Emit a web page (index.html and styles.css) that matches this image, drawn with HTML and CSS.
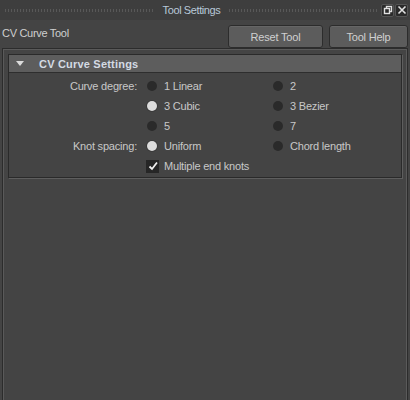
FILE: index.html
```html
<!DOCTYPE html>
<html>
<head>
<meta charset="utf-8">
<link rel="stylesheet" href="styles.css">
</head>
<body>
<div class="titlebar">
  <div class="grip"></div>
  <div class="title">Tool Settings</div>
  <div class="grip"></div>
  <div class="winbtns">
    <span class="wbtn"><svg width="10" height="10" viewBox="0 0 10 10"><rect x="3.5" y="1.5" width="5" height="5" fill="none" stroke="#e0e0e0" stroke-width="1.4"/><rect x="1.5" y="3.5" width="5" height="5" fill="#2a2a2a" stroke="#e0e0e0" stroke-width="1.4"/></svg></span>
    <span class="wbtn"><svg width="10" height="10" viewBox="0 0 10 10"><path d="M1.5 1.5 L8.5 8.5 M8.5 1.5 L1.5 8.5" stroke="#e0e0e0" stroke-width="1.6"/></svg></span>
  </div>
</div>
<div class="toprow">
  <div class="toolname">CV Curve Tool</div>
  <button class="btn reset">Reset Tool</button>
  <button class="btn help">Tool Help</button>
</div>
<div class="frame">
  <div class="section">
    <div class="sechead"><span class="tri"></span><span class="sectitle">CV Curve Settings</span></div>
    <div class="secbody">
      <div class="lbl">Curve degree:</div>
      <div class="opt"><span class="radio"></span>1 Linear</div>
      <div class="opt"><span class="radio"></span>2</div>
      <div class="lbl"></div>
      <div class="opt"><span class="radio on"></span>3 Cubic</div>
      <div class="opt"><span class="radio"></span>3 Bezier</div>
      <div class="lbl"></div>
      <div class="opt"><span class="radio"></span>5</div>
      <div class="opt"><span class="radio"></span>7</div>
      <div class="lbl">Knot spacing:</div>
      <div class="opt"><span class="radio on"></span>Uniform</div>
      <div class="opt"><span class="radio"></span>Chord length</div>
      <div class="lbl"></div>
      <div class="opt wide"><span class="check"><svg width="12" height="12" viewBox="0 0 12 12"><path d="M2.5 6.5 L5 9 L10 2.5" fill="none" stroke="#f0f0f0" stroke-width="1.8"/></svg></span>Multiple end knots</div>
    </div>
  </div>
</div>
</body>
</html>
```
FILE: styles.css
```css
html, body {
  margin: 0;
  padding: 0;
  background: #444444;
  width: 410px;
  height: 400px;
  overflow: hidden;
  font-family: "Liberation Sans", Arial, sans-serif;
  font-size: 11px;
  color: #c8c8c8;
}
.titlebar {
  height: 20px;
  background: #3e3e3e;
  display: flex;
  align-items: center;
  padding-left: 5px;
  box-sizing: border-box;
}
.grip {
  flex: 1;
  height: 3px;
  background: repeating-linear-gradient(90deg, #585858 0 1px, transparent 1px 3px);
}
.title {
  padding: 0 9px;
  color: #b8c8d8;
  font-size: 11px;
  letter-spacing: -0.4px;
}
.winbtns {
  display: flex;
  gap: 1px;
  margin-left: 3px;
  margin-right: 2px;
}
.wbtn {
  width: 13px;
  height: 13px;
  background: #2a2a2a;
  border: 1px solid #555;
  border-radius: 2px;
  box-sizing: border-box;
  display: flex;
  align-items: center;
  justify-content: center;
}
.toprow {
  height: 28px;
  display: flex;
  align-items: center;
  padding-left: 2px;
  box-sizing: border-box;
}
.toolname {
  flex: 1;
  margin-top: -3px;
  letter-spacing: -0.3px;
  color: #cfcfcf;
}
.btn {
  height: 23px;
  background: #5c5c5c;
  border: 1px solid #2c2c2c;
  border-radius: 3px;
  color: #d0d0d0;
  font-family: "Liberation Sans", Arial, sans-serif;
  font-size: 11px;
  letter-spacing: -0.2px;
  padding: 0;
  margin-top: 5px;
  box-shadow: inset 0 1px 0 #666;
}
.reset {
  width: 95px;
  margin-right: 6px;
}
.help {
  width: 79px;
  margin-right: 2px;
}
.frame {
  margin: 0 2px 0 2px;
  height: 352px;
  border: 1px solid #2c2c2c;
  border-bottom: none;
  box-shadow: inset 1px 1px 0 #5a5a5a, inset -1px 0 0 #5a5a5a;
  padding: 5px 5px 0 5px;
  box-sizing: border-box;
}
.section {
  border: 1px solid #2a2a2a;
  box-shadow: 1px 1px 0 #5e5e5e;
}
.sechead {
  height: 17px;
  background: #5d5d5d;
  border-bottom: 1px solid #2e2e2e;
  display: flex;
  align-items: center;
}
.tri {
  width: 0;
  height: 0;
  border-left: 4px solid transparent;
  border-right: 4px solid transparent;
  border-top: 5px solid #dcdcdc;
  margin-left: 7px;
  margin-right: 15px;
}
.sectitle {
  font-weight: bold;
  color: #d4dbe4;
  letter-spacing: 0.2px;
}
.secbody {
  display: grid;
  grid-template-columns: 132px 126px 1fr;
  grid-auto-rows: 20px;
  padding: 3px 0 1px 0;
}
.lbl {
  text-align: right;
  padding-right: 4px;
  line-height: 20px;
  letter-spacing: -0.2px;
}
.opt {
  display: flex;
  align-items: center;
  letter-spacing: -0.2px;
}
.opt.wide {
  grid-column: span 2;
}
.radio {
  width: 10px;
  height: 10px;
  border-radius: 50%;
  background: #2a2a2a;
  margin-left: 6px;
  margin-right: 7px;
  flex: none;
}
.radio.on {
  background: #dcdcdc;
  box-shadow: 0 0 0 1px #3a3a3a;
}
.check {
  width: 13px;
  height: 13px;
  background: #262626;
  margin-left: 5px;
  margin-right: 5px;
  display: flex;
  align-items: center;
  justify-content: center;
}
```
